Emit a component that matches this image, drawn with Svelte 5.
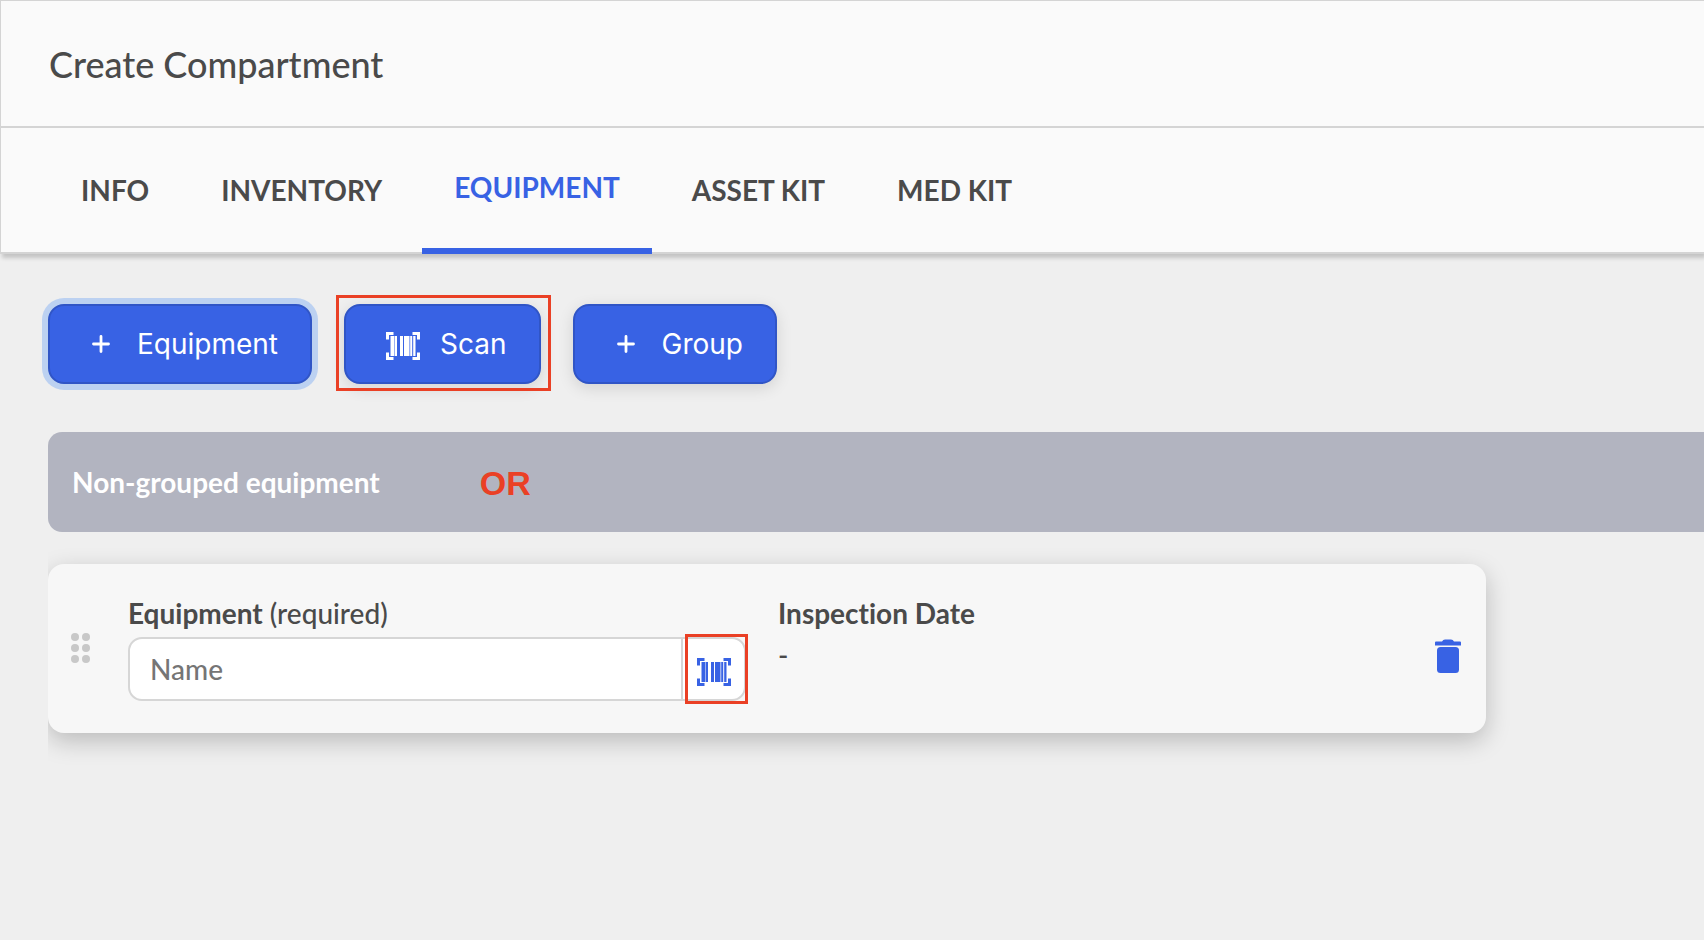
<script lang="ts">
  type Tab = { id: string; label: string };

  const tabs: Tab[] = [
    { id: 'info', label: 'INFO' },
    { id: 'inventory', label: 'INVENTORY' },
    { id: 'equipment', label: 'EQUIPMENT' },
    { id: 'asset-kit', label: 'ASSET KIT' },
    { id: 'med-kit', label: 'MED KIT' }
  ];

  let activeTab = $state('equipment');
  let name = $state('');
</script>

{#snippet plusIcon()}
  <svg class="plus" viewBox="0 0 18 18" aria-hidden="true">
    <path d="M9 1.5v15M1.5 9h15" />
  </svg>
{/snippet}

{#snippet barcodeIcon()}
  <svg class="barcode" viewBox="0 0 34 28" aria-hidden="true">
    <path d="M0 0h7.5v3H3v4.500H0zM26.500 0H34v7.500h-3V3h-4.500zM0 20.500h3V25h4.500v3H0zM31 20.500h3V28h-7.500v-3H31z" />
    <path d="M4.500 4h4v20h-4zM9 4h2v20H9zM14 4h3v20h-3zM18 4h5.500v20H18zM24.200 4h2v20h-2zM27.200 4h2.300v20h-2.300z" />
  </svg>
{/snippet}

<div class="page">
  <header class="header">
    <h1>Create Compartment</h1>
    <div class="tabs" role="tablist">
      {#each tabs as tab (tab.id)}
        <button
          class="tab"
          class:active={activeTab === tab.id}
          role="tab"
          aria-selected={activeTab === tab.id}
          onclick={() => (activeTab = tab.id)}
        >
          {tab.label}
        </button>
      {/each}
    </div>
  </header>

  <main class="content">
    <div class="actions">
      <button class="action focused">{@render plusIcon()}Equipment</button>
      <div class="marked">
        <button class="action">{@render barcodeIcon()}Scan</button>
        <span class="marker"></span>
      </div>
      <button class="action">{@render plusIcon()}Group</button>
    </div>

    <div class="group-bar">
      <h2>Non-grouped equipment</h2>
      <span class="note">OR</span>
    </div>

    <div class="list">
      <div class="card">
        <svg class="handle" viewBox="0 0 20 31" aria-hidden="true">
          {#each [4, 15, 26] as y}
            <circle cx="4" cy={y} r="4" />
            <circle cx="15" cy={y} r="4" />
          {/each}
        </svg>

        <div class="field">
          <label for="equipment-name"><strong>Equipment</strong> (required)</label>
          <div class="input-group">
            <input id="equipment-name" type="text" placeholder="Name" bind:value={name} />
            <div class="marked scan-cell">
              <button class="scan" aria-label="Scan barcode">{@render barcodeIcon()}</button>
              <span class="marker small"></span>
            </div>
          </div>
        </div>

        <div class="field">
          <strong>Inspection Date</strong>
          <span class="value">-</span>
        </div>

        <button class="delete" aria-label="Delete equipment">
          <svg viewBox="0 0 26 34" aria-hidden="true">
            <path d="M1 2.500h6q1-2 3-2h6q2 0 3 2h6q1 0 1 1V6.500H0v-3q0-1 1-1z" />
            <rect x="2" y="8" width="22" height="26" rx="3.500" />
          </svg>
        </button>
      </div>
    </div>
  </main>
</div>

<style>
  :global(body) {
    margin: 0;
    background: #efefef;
  }

  .page {
    min-height: 100vh;
    font-family: Lato, sans-serif;
    font-size: 28px;
    font-variant-ligatures: none;
    line-height: 36px;
    color: #4a4a4a;
    overflow-x: hidden;
  }

  button,
  input {
    font: inherit;
    color: inherit;
    margin: 0;
  }

  button {
    cursor: pointer;
  }

  .header {
    position: relative;
    background: #fafafa;
    border-top: 1px solid #d4d4d4;
    border-left: 1px solid #d4d4d4;
    border-bottom: 2px solid #d4d4d4;
    box-shadow: 2px 4px 4px rgba(0, 0, 0, 0.18);
  }

  h1 {
    margin: 0;
    padding: 41px 48px 40px;
    border-bottom: 2px solid #d4d4d4;
    font-size: 36px;
    font-weight: 500;
    line-height: 44px;
  }

  .tabs {
    display: flex;
    gap: 8px;
    height: 124px;
    padding: 0 48px;
  }

  .tab {
    margin-bottom: -2px;
    padding: 0 32px 2px;
    border: 0;
    background: none;
    font-weight: 700;
  }

  .tab.active {
    border-bottom: 6px solid #3862e4;
    color: #3862e4;
  }

  .content {
    padding: 50px 0 0 48px;
  }

  .actions {
    display: flex;
    gap: 32px;
    margin-bottom: 48px;
  }

  .action {
    display: flex;
    align-items: center;
    gap: 27px;
    height: 80px;
    padding: 0 32px 0 42px;
    border: 2px solid #3055c6;
    border-radius: 16px;
    background: #3862e4;
    box-shadow: 0 4px 16px rgba(0, 0, 0, 0.12);
    color: #fff;
    font-family: Inter, sans-serif;
  }

  .action.focused {
    box-shadow: 0 0 0 6px #bcd1f1;
  }

  .plus {
    width: 18px;
    height: 18px;
    fill: none;
    stroke: currentColor;
    stroke-width: 2.8;
    stroke-linecap: round;
  }

  .barcode {
    width: 34px;
    height: 28px;
    fill: currentColor;
  }

  .marked {
    position: relative;
  }

  .marked .action {
    gap: 20px;
    padding-left: 40px;
  }

  .action .barcode {
    margin-top: 3px;
  }

  .marker {
    position: absolute;
    inset: -9px -10px -7px -8px;
    border: 3px solid #ea4025;
    pointer-events: none;
  }

  .marker.small {
    inset: -5px -4px -5px 2px;
  }

  .group-bar {
    display: flex;
    align-items: center;
    gap: 100px;
    height: 100px;
    padding: 0 24px;
    border-radius: 14px 0 0 14px;
    background: #b2b4c0;
  }

  h2 {
    margin: 0;
    color: #fff;
    font-size: 28px;
    font-weight: 700;
  }

  .note {
    padding-top: 2px;
    color: #ea4025;
    font-family: 'Liberation Sans', Arial, sans-serif;
    font-size: 34px;
    font-weight: 700;
  }

  /* cuts the card shadow off at the left edge */
  .list {
    overflow: hidden;
    padding: 32px 218px 48px 0;
  }

  .card {
    display: grid;
    grid-template-columns: 48px 1fr 1fr 58px;
    column-gap: 32px;
    padding: 31px 0 32px;
    border-radius: 16px;
    background: #f7f7f7;
    box-shadow: 0 8px 24px rgba(0, 0, 0, 0.22);
  }

  .handle {
    align-self: center;
    justify-self: end;
    width: 20px;
    height: 31px;
    margin-right: 5px;
    fill: #c8c8c8;
  }

  .field {
    display: flex;
    flex-direction: column;
    gap: 6px;
    min-width: 0;
    font-weight: 500;
  }

  .field strong {
    font-weight: 700;
  }

  .input-group {
    display: flex;
    height: 60px;
    border: 2px solid #d6d6d6;
    border-radius: 14px;
    background: #fff;
  }

  input {
    flex: 1;
    min-width: 0;
    padding: 0 20px;
    border: 0;
    outline: 0;
    background: none;
  }

  input::placeholder {
    color: #757575;
    opacity: 1;
  }

  .scan-cell {
    width: 61px;
    border-left: 2px solid #d6d6d6;
  }

  .scan {
    display: flex;
    align-items: center;
    justify-content: center;
    width: 100%;
    height: 100%;
    padding: 6px 0 0;
    border: 0;
    background: none;
    color: #3862e4;
  }

  .delete {
    align-self: center;
    justify-self: end;
    display: flex;
    margin: 16px 25px 0 0;
    padding: 0;
    border: 0;
    background: none;
    color: #3862e4;
  }

  .delete svg {
    width: 26px;
    height: 34px;
    fill: currentColor;
  }
</style>
